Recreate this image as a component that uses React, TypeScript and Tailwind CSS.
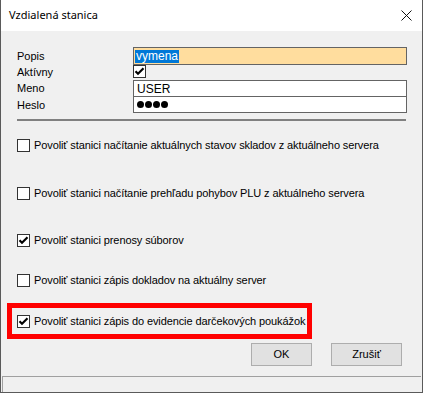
import React from "react";

const font = { fontFamily: '"Liberation Sans", Arial, sans-serif' };

function Check({ checked }: { checked: boolean }) {
  return (
    <div className="w-[13px] h-[13px] border border-[#333333] bg-white flex items-center justify-center shrink-0">
      {checked && (
        <svg width="11" height="11" viewBox="0 0 11 11">
          <path d="M1.5 5.2 L4 7.7 L9.5 2.2" stroke="#000" strokeWidth="2.2" fill="none" />
        </svg>
      )}
    </div>
  );
}

function Row({ checked, label }: { checked: boolean; label: string }) {
  return (
    <div className="flex items-center h-[13px]">
      <Check checked={checked} />
      <span className="ml-[4px] text-[11px] tracking-[-0.1px] text-black leading-none whitespace-nowrap">{label}</span>
    </div>
  );
}

export default function App() {
  return (
    <div
      className="w-[423px] h-[393px] bg-[#f0f0f0] border-x border-b border-[#5a5a5a] flex flex-col overflow-hidden"
      style={font}
    >
      <div className="h-[31px] bg-white flex items-center justify-between pl-[8px] pr-[10px] shrink-0">
        <span className="text-[11px] text-black" style={{ fontFamily: '"Noto Sans", "Open Sans", sans-serif' }}>
          Vzdialená stanica
        </span>
        <svg width="11" height="11" viewBox="0 0 11 11">
          <path d="M0.5 0.5 L10.5 10.5 M10.5 0.5 L0.5 10.5" stroke="#111" strokeWidth="1" />
        </svg>
      </div>

      <div className="flex flex-col pl-[16px] pr-[15px] pt-[16px]">
        <div className="grid grid-cols-[116px_1fr] text-[11px] text-black">
          <div className="h-[18px] flex items-center">Popis</div>
          <div className="h-[18px] border border-[#646464] bg-[#ffdd9e] flex items-center pl-[1px]">
            <span className="bg-[#0078d7] text-white px-[1px] leading-[13px] text-[12px]">vymena</span>
          </div>
          <div className="h-[14px] flex items-center">Aktívny</div>
          <div className="h-[14px]">
            <Check checked={true} />
          </div>
          <div className="h-[17px] flex items-center mt-[1px]">Meno</div>
          <div className="h-[17px] border border-[#646464] bg-white flex items-center pl-[3px] mt-[1px] text-[12px]">USER</div>
          <div className="h-[16px] flex items-center">Heslo</div>
          <div className="h-[16px] border border-t-0 border-[#646464] bg-white flex items-center pl-[3px] gap-[1px]">
            {[0, 1, 2, 3].map((i) => (
              <span key={i} className="w-[7px] h-[7px] rounded-full bg-black inline-block" />
            ))}
          </div>
        </div>

        <div className="mt-[6px] h-[2px] bg-[#808080] mr-[1px]" />

        <div className="mt-[18px]">
          <Row checked={false} label="Povoliť stanici načítanie aktuálnych stavov skladov z aktuálneho servera" />
        </div>
        <div className="mt-[35px]">
          <Row checked={false} label="Povoliť stanici načítanie prehľadu pohybov PLU z aktuálneho servera" />
        </div>
        <div className="mt-[34px]">
          <Row checked={true} label="Povoliť stanici prenosy súborov" />
        </div>
        <div className="mt-[27px]">
          <Row checked={false} label="Povoliť stanici zápis dokladov na aktuálny server" />
        </div>

        <div className="mt-[16px] ml-[-10px] w-[305px] h-[36px] border-[5px] border-[#ff0000] flex items-center pl-[5px]">
          <Row checked={true} label="Povoliť stanici zápis do evidencie darčekových poukážok" />
        </div>

        <div className="mt-[4px] flex justify-end pr-[5px] gap-[19px]">
          <button className="w-[61px] h-[23px] border border-[#adadad] bg-[#e1e1e1] text-[11px] text-black">OK</button>
          <button className="w-[71px] h-[23px] border border-[#adadad] bg-[#e1e1e1] text-[11px] text-black">Zrušiť</button>
        </div>
      </div>

      <div className="mt-[10px] mx-[1px] flex-1 border-t border-l border-[#a0a0a0]" />
    </div>
  );
}
